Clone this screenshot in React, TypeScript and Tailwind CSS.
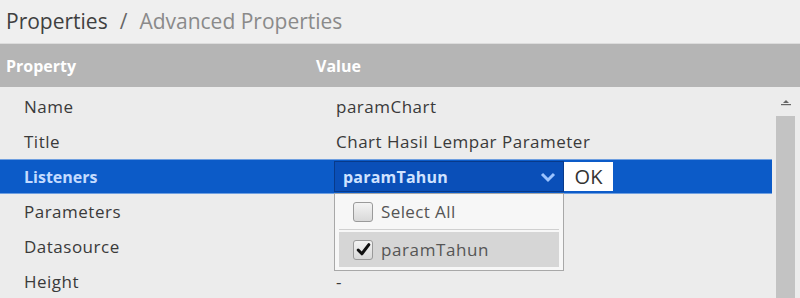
import React from 'react';

const rows = [
    { name: 'Name', value: 'paramChart' },
    { name: 'Title', value: 'Chart Hasil Lempar Parameter' },
    { name: 'Listeners', value: '' },
    { name: 'Parameters', value: '' },
    { name: 'Datasource', value: '' },
    { name: 'Height', value: '-' },
];

const Checkbox = ({ checked }: { checked?: boolean }) => (
    <span className="w-[20px] h-[20px] rounded-[3px] border border-[#9a9a9a] bg-gradient-to-b from-[#f4f4f4] to-[#d9d9d9] flex items-center justify-center">
        {checked && (
            <svg width="15" height="15" viewBox="0 0 14 14">
                <path d="M2 7.5 L5.5 11 L12 2.5" fill="none" stroke="#111" strokeWidth="2.8" strokeLinecap="round" strokeLinejoin="round" />
            </svg>
        )}
    </span>
);

export default function App() {
    return (
        <div className="w-[800px] h-[298px] overflow-hidden bg-[#ececec] text-[#3a3a3a] font-['Open_Sans',sans-serif]">
            {/* Breadcrumb */}
            <div className="h-[44px] flex items-center pl-[6px] text-[21px] bg-[#efefef] border-b border-[#dcdcdc]">
                <span className="text-[#404040]">Properties</span>
                <span className="text-[#666] mx-[12px]">/</span>
                <span className="text-[#8a8a8a]">Advanced Properties</span>
            </div>

            {/* Header */}
            <div className="h-[43px] flex items-center bg-[#b5b5b5] text-white font-bold text-[16px]">
                <span className="w-[316px] pl-[6px]">Property</span>
                <span>Value</span>
            </div>

            {/* Body */}
            <div className="flex">
                <div className="w-[772px] pt-[2px] relative">
                    {rows.map((row) =>
                        row.name === 'Listeners' ? (
                            <div key={row.name} className="h-[35px] flex items-center bg-[#0c5bc8] border-y border-[#6f9fe0]">
                                <span className="w-[334px] pl-[24px] text-[#c4dbff] font-bold text-[16px]">{row.name}</span>
                                <div className="relative flex items-center">
                                    <div className="w-[230px] h-[31px] flex items-center justify-between bg-[#0a4fb8] border border-[#083a8a] pl-[8px] pr-[6px]">
                                        <span className="font-bold text-[16px] tracking-[0.2px] text-[#d0e2ff]">paramTahun</span>
                                        <svg width="18" height="12" viewBox="0 0 18 12">
                                            <path d="M3 3 L9 9 L15 3" fill="none" stroke="#9cc4ff" strokeWidth="3" />
                                        </svg>
                                    </div>
                                    <div className="w-[49px] h-[29px] flex items-center justify-center bg-white text-[20px] text-[#333]">OK</div>

                                    {/* Dropdown */}
                                    <div className="absolute left-0 top-[32px] w-[230px] h-[78px] bg-[#f7f7f7] border border-[#a8a8a8] z-10 px-[4px]">
                                        <div className="h-[36px] flex items-center gap-[8px] pl-[14px] border-b border-[#d0d0d0] text-[17px] tracking-[0.4px] text-[#555]">
                                            <Checkbox />
                                            <span>Select All</span>
                                        </div>
                                        <div className="h-[35px] mt-[2px] flex items-center gap-[8px] pl-[14px] bg-[#d6d6d6] text-[17px] tracking-[0.6px] text-[#555]">
                                            <Checkbox checked />
                                            <span>paramTahun</span>
                                        </div>
                                    </div>
                                </div>
                            </div>
                        ) : (
                            <div key={row.name} className="h-[35px] flex items-center text-[17px] tracking-[0.5px]">
                                <span className="w-[336px] pl-[24px]">{row.name}</span>
                                <span>{row.value}</span>
                            </div>
                        )
                    )}
                </div>

                {/* Scrollbar */}
                <div className="ml-[4px] w-[19px] flex flex-col items-center">
                    <svg width="12" height="10" viewBox="0 0 12 10" className="mt-[10px]">
                        <path d="M3 6 L6 3 L9 6 Z" fill="#666" />
                        <rect x="1" y="7" width="10" height="1.2" fill="#666" />
                    </svg>
                    <div className="mt-[9px] w-[19px] flex-1 h-[200px] bg-[#c3c3c3]" />
                </div>
            </div>
        </div>
    );
}
